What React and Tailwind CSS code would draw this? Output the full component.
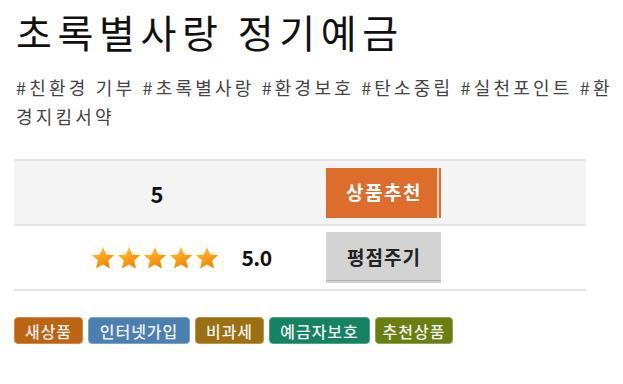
import React from "react";

const Star = () => (
  <svg width="26" height="24" viewBox="0 0 26 24">
    <defs>
      <linearGradient id="sg" x1="0" y1="0" x2="0.6" y2="1">
        <stop offset="0" stopColor="#ffd24a" />
        <stop offset="0.5" stopColor="#ffa41c" />
        <stop offset="1" stopColor="#f08400" />
      </linearGradient>
    </defs>
    <path
      d="M13 1 L16.2 8.4 L24.2 9.1 L18.2 14.4 L20 22.6 L13 18.4 L6 22.6 L7.8 14.4 L1.8 9.1 L9.8 8.4 Z"
      fill="url(#sg)"
    />
  </svg>
);

const tags = [
  { t: "새상품", c: "bg-[#bb6412] border-[#d08a4a]", w: "w-[69px]" },
  { t: "인터넷가입", c: "bg-[#4a7fb0] border-[#7aa3c8]", w: "w-[102px]" },
  { t: "비과세", c: "bg-[#9a7011] border-[#b9954a]", w: "w-[69px]" },
  { t: "예금자보호", c: "bg-[#158262] border-[#4fa38a]", w: "w-[101px]" },
  { t: "추천상품", c: "bg-[#6a7f12] border-[#93a44c]", w: "w-[78px]" },
];

export default function App() {
  const font = { fontFamily: '"Noto Sans CJK KR", "Noto Sans", sans-serif' };
  return (
    <div className="w-[623px] h-[384px] bg-white px-[14px] pt-[5px]" style={font}>
      <h1 className="text-[39px] leading-[52px] tracking-[5.6px] text-[#111] pl-[2px]">초록별사랑 정기예금</h1>
      <div className="mt-[16px] text-[18px] leading-[29px] text-[#444] pl-[2px] tracking-[3.2px] whitespace-nowrap">
        #친환경 기부 #초록별사랑 #환경보호 #탄소중립 #실천포인트 #환
        <br />
        경지킴서약
      </div>
      <div className="mt-[28px] w-[572px] border-t-2 border-[#e5e5e5]">
        <div className="flex h-[65px] items-center bg-[#f4f4f4] border-b-2 border-[#e5e5e5]">
          <div className="w-[312px] flex justify-center pr-[26px] text-[22px] leading-none font-bold text-[#111]">5</div>
          <button className="w-[115px] h-[50px] bg-[#dc6d2c] text-white text-[19px] font-bold tracking-[1.5px] pl-[1px] shadow-[inset_-2px_0_0_#dc6d2c,inset_-4px_0_0_#f3d0b8]">
            상품추천
          </button>
        </div>
        <div className="flex h-[65px] items-center border-b-2 border-[#e5e5e5]">
          <div className="w-[312px] flex justify-center items-center pl-[22px]">
            <div className="flex">
              <Star /><Star /><Star /><Star /><Star />
            </div>
            <span className="ml-[21px] text-[21px] leading-none font-bold tracking-[-0.5px] text-[#111]">5.0</span>
          </div>
          <button className="w-[115px] h-[51px] bg-[#d3d3d3] text-[#222] text-[19px] font-bold tracking-[1px] pl-[1px] shadow-[inset_0_-2px_0_#d3d3d3,inset_0_-3px_0_#b3b3b3]">
            평점주기
          </button>
        </div>
      </div>
      <div className="mt-[26px] flex gap-[5px]">
        {tags.map((x) => (
          <span
            key={x.t}
            className={`${x.c} ${x.w} h-[27px] rounded-[4px] border flex items-center justify-center text-[16px] tracking-[1px] font-medium text-[#f1f1f1]`}
          >
            {x.t}
          </span>
        ))}
      </div>
    </div>
  );
}
